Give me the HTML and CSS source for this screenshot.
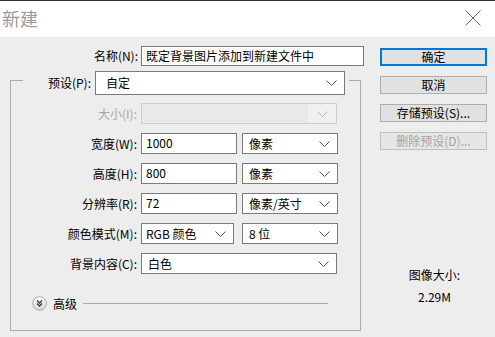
FILE: index.html
```html
<!DOCTYPE html>
<html lang="zh-CN">
<head>
<meta charset="utf-8">
<title>新建</title>
<link rel="stylesheet" href="styles.css">
</head>
<body>
<div class="dialog">
  <div class="titlebar">
    <span class="title">新建</span>
    <svg class="close" width="16" height="16" viewBox="0 0 16 16"><path d="M0.5 0.5 L15.5 15.5 M15.5 0.5 L0.5 15.5" stroke="#6a6a6a" stroke-width="1" fill="none"/></svg>
  </div>
  <div class="main">
    <div class="left">
      <div class="name-row">
        <label class="lbl name-lbl">名称(N):</label>
        <div class="field name-field">既定背景图片添加到新建文件中</div>
      </div>
      <div class="group">
        <div class="legend">
          <label class="lbl legend-lbl">预设(P):</label>
          <div class="field select preset">
            <span>自定</span>
            <svg width="11" height="6" viewBox="0 0 11 6"><polyline points="0.5,0.5 5.5,5.5 10.5,0.5" stroke="#555" fill="none"/></svg>
          </div>
        </div>
        <div class="rows">
          <div class="row">
            <label class="lbl row-lbl disabled">大小(I):</label>
            <div class="field select wide off">
              <span></span>
              <span class="drop"><svg width="11" height="6" viewBox="0 0 11 6"><polyline points="0.5,0.5 5.5,5.5 10.5,0.5" stroke="#b5b5b5" fill="none"/></svg></span>
            </div>
          </div>
          <div class="row">
            <label class="lbl row-lbl">宽度(W):</label>
            <div class="field num">1000</div>
            <div class="field select unit">
              <span>像素</span>
              <svg width="11" height="6" viewBox="0 0 11 6"><polyline points="0.5,0.5 5.5,5.5 10.5,0.5" stroke="#555" fill="none"/></svg>
            </div>
          </div>
          <div class="row">
            <label class="lbl row-lbl">高度(H):</label>
            <div class="field num">800</div>
            <div class="field select unit">
              <span>像素</span>
              <svg width="11" height="6" viewBox="0 0 11 6"><polyline points="0.5,0.5 5.5,5.5 10.5,0.5" stroke="#555" fill="none"/></svg>
            </div>
          </div>
          <div class="row">
            <label class="lbl row-lbl">分辨率(R):</label>
            <div class="field num">72</div>
            <div class="field select unit">
              <span>像素/英寸</span>
              <svg width="11" height="6" viewBox="0 0 11 6"><polyline points="0.5,0.5 5.5,5.5 10.5,0.5" stroke="#555" fill="none"/></svg>
            </div>
          </div>
          <div class="row">
            <label class="lbl row-lbl">颜色模式(M):</label>
            <div class="field select mode">
              <span>RGB 颜色</span>
              <svg width="11" height="6" viewBox="0 0 11 6"><polyline points="0.5,0.5 5.5,5.5 10.5,0.5" stroke="#555" fill="none"/></svg>
            </div>
            <div class="field select bits">
              <span>8 位</span>
              <svg width="11" height="6" viewBox="0 0 11 6"><polyline points="0.5,0.5 5.5,5.5 10.5,0.5" stroke="#555" fill="none"/></svg>
            </div>
          </div>
          <div class="row">
            <label class="lbl row-lbl">背景内容(C):</label>
            <div class="field select wide">
              <span>白色</span>
              <svg width="11" height="6" viewBox="0 0 11 6"><polyline points="0.5,0.5 5.5,5.5 10.5,0.5" stroke="#555" fill="none"/></svg>
            </div>
          </div>
        </div>
        <div class="advanced">
          <svg class="adv-icon" width="15" height="15" viewBox="0 0 15 15">
            <defs><linearGradient id="g" x1="0" y1="0" x2="0" y2="1"><stop offset="0" stop-color="#ffffff"/><stop offset="1" stop-color="#d6d6d6"/></linearGradient></defs>
            <circle cx="7.5" cy="7.5" r="6.8" fill="url(#g)" stroke="#a8a8a8"/>
            <polyline points="5,4.5 7.5,7 10,4.5" stroke="#333" stroke-width="1.3" fill="none"/>
            <polyline points="5,7.5 7.5,10 10,7.5" stroke="#333" stroke-width="1.3" fill="none"/>
          </svg>
          <span class="adv-text">高级</span>
          <span class="adv-line"></span>
        </div>
      </div>
    </div>
    <div class="right">
      <div class="btn primary">确定</div>
      <div class="btn">取消</div>
      <div class="btn">存储预设(S)...</div>
      <div class="btn disabled-btn">删除预设(D)...</div>
      <div class="info">图像大小:</div>
      <div class="info size">2.29M</div>
    </div>
  </div>
</div>
</body>
</html>
```
FILE: styles.css
```css
html, body {
  margin: 0;
  padding: 0;
}
body {
  width: 495px;
  height: 337px;
  overflow: hidden;
  background: #ededed;
  font-family: "Noto Sans CJK SC", "Microsoft YaHei", sans-serif;
  font-size: 12px;
  color: #000;
}
.dialog {
  width: 495px;
  height: 337px;
  display: flex;
  flex-direction: column;
}
.titlebar {
  box-sizing: border-box;
  height: 37px;
  background: #fff;
  border-top: 1px solid #2e2e2e;
  display: flex;
  align-items: center;
  justify-content: space-between;
  padding: 0 14px 0 2px;
}
.title {
  font-size: 18px;
  line-height: 22px;
  color: #9a9a9a;
  margin-top: -2px;
}
.close {
  display: block;
  margin-top: -2px;
}
.main {
  display: flex;
  padding-top: 9px;
}
.left {
  width: 370px;
  display: flex;
  flex-direction: column;
}
.lbl {
  line-height: 16px;
  text-align: right;
  white-space: nowrap;
}
.disabled {
  color: #a6a6a6;
}
.field {
  box-sizing: border-box;
  background: #fff;
  border: 1px solid #7a7a7a;
  line-height: 16px;
  white-space: nowrap;
}
.name-row {
  display: flex;
  align-items: center;
  gap: 3px;
}
.name-lbl {
  width: 138px;
}
.name-field {
  width: 223px;
  height: 20px;
  padding: 1px 0 0 4px;
}
.group {
  box-sizing: border-box;
  margin: 14px 0 0 10px;
  width: 351px;
  height: 251px;
  border: 1px solid #ababab;
  display: flex;
  flex-direction: column;
}
.legend {
  margin: -10px 0 0 12px;
  padding-right: 4px;
  align-self: flex-start;
  background: #ededed;
  display: flex;
  align-items: center;
  gap: 4px;
}
.legend-lbl {
  width: 68px;
}
.select {
  display: flex;
  align-items: center;
  justify-content: space-between;
  padding: 0 7px 0 6px;
}
.select svg {
  display: block;
  flex: none;
}
.preset {
  width: 250px;
  height: 24px;
  padding-left: 10px;
}
.rows {
  margin-top: 8px;
  display: flex;
  flex-direction: column;
  gap: 9px;
}
.row {
  display: flex;
  align-items: center;
  height: 21px;
}
.row-lbl {
  width: 126px;
  margin-right: 4px;
}
.wide {
  width: 196px;
  height: 21px;
}
.off {
  background: #e9e9e9;
  border-color: #cdcdcd;
  padding: 0;
}
.drop {
  align-self: stretch;
  width: 28px;
  background: #f0f0f0;
  display: flex;
  align-items: center;
  justify-content: center;
  margin-left: auto;
}
.num {
  width: 96px;
  height: 21px;
  padding: 1px 0 0 4px;
}
.unit {
  width: 96px;
  height: 21px;
  margin-left: 5px;
}
.mode {
  width: 93px;
  height: 21px;
  padding-left: 4px;
}
.bits {
  width: 96px;
  height: 21px;
  margin-left: 8px;
}
.advanced {
  margin: 22px 32px 0 21px;
  display: flex;
  align-items: center;
  height: 15px;
}
.adv-icon {
  display: block;
  flex: none;
}
.adv-text {
  margin-left: 6px;
  line-height: 16px;
}
.adv-line {
  flex: 1;
  height: 1px;
  margin-left: 6px;
  background: #a9a9a9;
}
.right {
  width: 107px;
  margin-left: 10px;
  padding-top: 2px;
  display: flex;
  flex-direction: column;
  gap: 10px;
}
.btn {
  box-sizing: border-box;
  height: 18px;
  background: #e1e1e1;
  border: 1px solid #adadad;
  text-align: center;
  line-height: 16px;
  white-space: nowrap;
}
.primary {
  border: 2px solid #0078d7;
  line-height: 14px;
}
.disabled-btn {
  color: #a3a3a3;
  border-color: #bfbfbf;
  background: #e6e6e6;
}
.info {
  text-align: center;
  line-height: 16px;
  margin-top: 107px;
  padding-left: 2px;
}
.info.size {
  margin-top: -4px;
}
```
